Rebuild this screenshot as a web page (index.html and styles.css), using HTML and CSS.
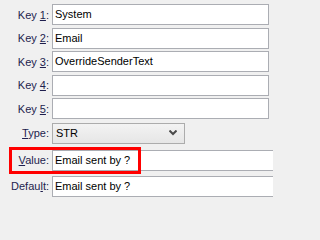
FILE: index.html
```html
<!DOCTYPE html>
<html>
<head>
<meta charset="utf-8">
<link rel="stylesheet" href="styles.css">
</head>
<body>
<div class="form">
  <div class="row key r1"><label class="lbl">Key <u>1</u>:</label><div class="box">System</div></div>
  <div class="row key"><label class="lbl">Key <u>2</u>:</label><div class="box">Email</div></div>
  <div class="row key"><label class="lbl">Key <u>3</u>:</label><div class="box">OverrideSenderText</div></div>
  <div class="row key"><label class="lbl">Key <u>4</u>:</label><div class="box"></div></div>
  <div class="row key"><label class="lbl">Key <u>5</u>:</label><div class="box"></div></div>
  <div class="row rtype"><label class="lbl"><u>T</u>ype:</label>
    <div class="select"><span>STR</span>
      <svg class="chev" width="8" height="6" viewBox="0 0 8 6"><path d="M0.5 0.5 L4 4 L7.5 0.5" fill="none" stroke="#4a4a4a" stroke-width="2"/></svg>
    </div>
  </div>
  <div class="row rvalue"><label class="lbl"><u>V</u>alue:</label><div class="box wide">Email sent by ?</div><div class="highlight"></div></div>
  <div class="row rdefault"><label class="lbl">Defau<u>l</u>t:</label><div class="box wide">Email sent by ?</div></div>
</div>
</body>
</html>
```
FILE: styles.css
```css
html, body {
  margin: 0;
  padding: 0;
  background: #f0f0f0;
  overflow: hidden;
}
body {
  width: 273px;
  height: 200px;
  font-family: "Liberation Sans", Arial, sans-serif;
  font-size: 11px;
}
.form {
  display: flex;
  flex-direction: column;
  padding-top: 4px;
}
.row {
  display: flex;
  align-items: center;
  position: relative;
  height: 21px;
}
.key + .key { margin-top: 2.5px; }
.rtype { margin-top: 3.5px; }
.rvalue { margin-top: 6px; }
.rdefault { margin-top: 5px; }
.lbl {
  width: 49px;
  flex: none;
  text-align: right;
  color: #1e1e4e;
  padding-right: 3px;
  white-space: nowrap;
}
.box {
  box-sizing: border-box;
  width: 217px;
  height: 21px;
  flex: none;
  border: 1px solid #abadb3;
  background: #fff;
  color: #000;
  padding-left: 2px;
  line-height: 19px;
  white-space: nowrap;
  overflow: hidden;
}
.box.wide { width: 240px; }
.select {
  box-sizing: border-box;
  width: 133px;
  height: 21px;
  flex: none;
  border: 1px solid #acacac;
  background: linear-gradient(#f3f3f3, #e6e6e6);
  color: #000;
  padding-left: 3px;
  line-height: 19px;
  display: flex;
  align-items: center;
  justify-content: space-between;
  padding-right: 7px;
}
.chev { display: block; }
.highlight {
  position: absolute;
  left: 9px;
  top: -3px;
  width: 132px;
  height: 27px;
  box-sizing: border-box;
  border: 3px solid #ff0000;
  pointer-events: none;
}
```
